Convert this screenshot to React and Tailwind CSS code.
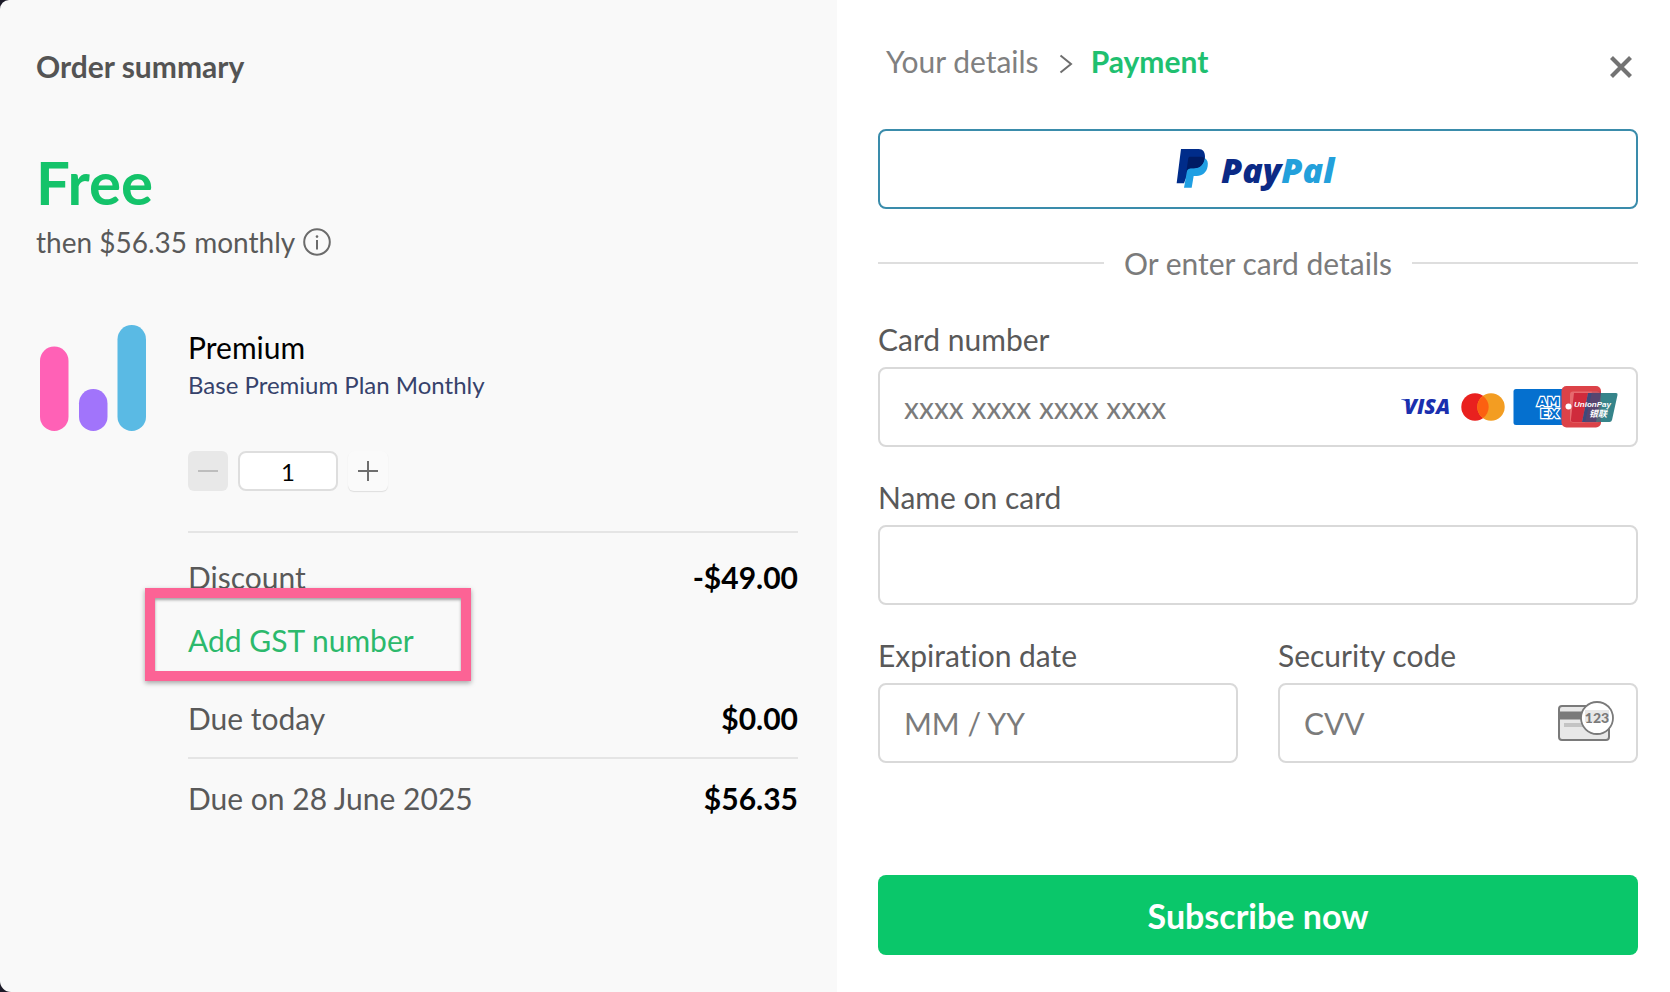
import { useState } from "react";

const fieldClass =
  "h-20 w-full rounded-lg border-2 border-[#d9d9d9] bg-white px-6 text-[30px] text-[#4f4f4f] outline-none placeholder:text-[#7b7b7b] focus:border-[#0ac76a]";

function InfoIcon() {
  return (
    <svg viewBox="0 0 28 28" className="size-7" fill="none" aria-hidden="true">
      <circle cx="14" cy="14" r="12.8" stroke="#6b6b6b" strokeWidth="2" />
      <circle cx="14" cy="8.6" r="1.3" fill="#6b6b6b" />
      <path d="M14 12v9.4" stroke="#6b6b6b" strokeWidth="2" />
    </svg>
  );
}

function PlanLogo() {
  return (
    <svg viewBox="0 0 106 106" className="h-[106px] w-[106px]" aria-hidden="true">
      <rect x="0" y="21.5" width="28.5" height="84.5" rx="14.2" fill="#ff61b6" />
      <rect x="39" y="64" width="28.5" height="42" rx="14.2" fill="#a174fb" />
      <rect x="77.5" y="0" width="28.5" height="106" rx="14.2" fill="#5abae4" />
    </svg>
  );
}

function PayPalLogo() {
  return (
    <svg viewBox="0 0 164 48" className="h-12 w-[164px]" role="img" aria-label="PayPal">
      <g transform="translate(0 3) scale(0.3333)">
        <path d="M15 3H68C81 3 87 12 87 26C87 48 74 61 55 62L34 80L24 106H2Z" fill="#002c8a" />
        <path
          d="M86 30C94 35 97 43 95 55C92 74 79 84 62 84H53L47 119H24L32 74C33 66 37 62 44 61H55C74 60 84 47 86 30Z"
          fill="#1f9fe3"
        />
        <path
          d="M37 30C38 27 40 26 44 26H70C80 26 84 28 86 31C83 49 73 61 55 61H43C36 62 32 66 31 72Z"
          fill="#001c64"
        />
      </g>
      <text x="45" y="38" className="font-['Open_Sans',sans-serif] text-[34px] font-extrabold italic">
        <tspan fill="#0b2a86">Pay</tspan>
        <tspan fill="#23a0db">Pal</tspan>
      </text>
    </svg>
  );
}

function VisaLogo() {
  return (
    <svg viewBox="0 0 52 30" className="h-[30px] w-[52px]" role="img" aria-label="Visa">
      <path d="M0 7.2H7L9.500 14C7.500 10.400 4 8.200 0 7.600Z" fill="#1a2fae" />
      <text
        x="3"
        y="22"
        fill="#1a2fae"
        className="font-['Open_Sans',sans-serif] text-[21px] font-extrabold italic"
      >
        VISA
      </text>
    </svg>
  );
}

function MastercardLogo() {
  return (
    <svg viewBox="0 0 44 28" className="h-7 w-11" role="img" aria-label="Mastercard">
      <circle cx="14" cy="14" r="13.7" fill="#e9211f" />
      <circle cx="30" cy="14" r="13.7" fill="#f39d22" />
      <path d="M22 2.9a13.7 13.7 0 0 1 0 22.2a13.7 13.7 0 0 1 0-22.2Z" fill="#fc6011" />
    </svg>
  );
}

function AmexUnionPayLogo() {
  return (
    <svg
      viewBox="0 0 105 42"
      className="h-[42px] w-[105px]"
      role="img"
      aria-label="American Express and UnionPay"
    >
      <rect x="0.5" y="3" width="56" height="36" rx="2.5" fill="#0570cf" />
      <g
        fill="#0570cf"
        stroke="#ffffff"
        strokeWidth="2.4"
        paintOrder="stroke"
        className="font-['DejaVu_Sans',sans-serif] text-[13px] font-bold"
      >
        <text x="24" y="20">AM</text>
        <text x="27" y="32">EX</text>
      </g>
      <rect x="48.5" y="0" width="39.5" height="41.5" rx="5" fill="#dc4248" />
      <rect x="57" y="5.5" width="30" height="31" rx="3" fill="#e66a6e" />
      <path d="M61 7H75L69 36H60C58 36 57.5 35 58 33Z" fill="#cf2b3c" />
      <path d="M75 7H92L86 36H69Z" fill="#3d4a7c" />
      <path d="M88 7H103Q105 7 104.500 9L99 34Q98.500 36 96.500 36H83Z" fill="#36848a" />
      <path d="M79 5.500H88V36.500H72Z" fill="#8a3b58" opacity="0.35" />
      <circle cx="55.500" cy="20.500" r="3" fill="#ffffff" />
      <text
        x="61"
        y="21"
        fill="#ffffff"
        className="font-['Liberation_Sans',sans-serif] text-[8px] font-bold italic"
      >
        UnionPay
      </text>
      <text
        x="76"
        y="31"
        fill="#ffffff"
        className="font-['Noto_Sans_CJK_SC',sans-serif] text-[9px] font-bold italic"
      >
        银联
      </text>
    </svg>
  );
}

function CvvIcon() {
  return (
    <svg viewBox="0 0 56 40" className="h-10 w-14" aria-hidden="true">
      <rect x="1" y="5" width="50" height="34" rx="3" fill="#e8e8e8" stroke="#7a7a7a" strokeWidth="2" />
      <path d="M1 10.500H28V18.500H1Z" fill="#7a7a7a" />
      <path d="M6 22H28V26H6Z" fill="#c4c4c4" />
      <circle cx="39" cy="17" r="16" fill="#ffffff" stroke="#7a7a7a" strokeWidth="1.800" />
      <path d="M27 9H51V21H27Z" fill="#e8e8e8" />
      <text
        x="39"
        y="21.500"
        textAnchor="middle"
        fill="#7a7a7a"
        className="font-['Lato',sans-serif] text-[14px] font-black"
      >
        123
      </text>
    </svg>
  );
}

function CloseIcon() {
  return (
    <svg viewBox="0 0 22 22" className="size-[22px]" aria-hidden="true">
      <path d="M1.500 1.500L20.500 20.500M20.500 1.500L1.500 20.500" stroke="#737373" strokeWidth="4.200" />
    </svg>
  );
}

function AmountRow({ label, value }) {
  return (
    <div className="flex items-baseline justify-between text-[30px] leading-9">
      <dt className="text-[#595959]">{label}</dt>
      <dd className="font-bold text-black">{value}</dd>
    </div>
  );
}

function OrderSummary() {
  const [quantity, setQuantity] = useState(1);
  return (
    <section className="bg-[#f9f9f9] pt-12 pr-[39px] pl-9">
      <h2 className="text-[30px] leading-9 font-bold text-[#545454]">Order summary</h2>
      <p className="mt-[62px] text-[60px] leading-[72px] font-bold text-[#14c36a]">Free</p>
      <div className="mt-1.5 flex items-center gap-2">
        <p className="text-[28px] leading-9 text-[#595959]">then $56.35 monthly</p>
        <button type="button" aria-label="Price details">
          <InfoIcon />
        </button>
      </div>

      <div className="mt-[65px] flex gap-[42px] pl-1">
        <div className="shrink-0">
          <PlanLogo />
        </div>
        <div className="min-w-0 flex-1">
          <h3 className="mt-1 text-[30px] leading-9 text-black">Premium</h3>
          <p className="mt-1.5 text-2xl leading-7 text-[#36426b]">Base Premium Plan Monthly</p>

          <div className="mt-[52px] flex gap-2.5">
            <button
              type="button"
              aria-label="Decrease quantity"
              disabled={quantity === 1}
              onClick={() => setQuantity(quantity - 1)}
              className="flex size-10 items-center justify-center rounded-md bg-[#e8e8e8]"
            >
              <svg viewBox="0 0 20 20" className="size-5" aria-hidden="true">
                <path d="M0 10H20" stroke="#bdbdbd" strokeWidth="2" />
              </svg>
            </button>
            <input
              aria-label="Quantity"
              value={quantity}
              onChange={(event) => setQuantity(Number(event.target.value) || 1)}
              className="h-10 w-[100px] rounded-lg border-2 border-[#dedede] bg-white text-center text-2xl text-black outline-none"
            />
            <button
              type="button"
              aria-label="Increase quantity"
              onClick={() => setQuantity(quantity + 1)}
              className="flex size-10 items-center justify-center rounded-md bg-[#fafafa] shadow-[0_1px_1px_#dedede]"
            >
              <svg viewBox="0 0 20 20" className="size-5" aria-hidden="true">
                <path d="M0 10H20M10 0V20" stroke="#6e6e6e" strokeWidth="2" />
              </svg>
            </button>
          </div>

          <dl className="mt-10 border-t-2 border-[#e5e5e5] pt-[26px]">
            <AmountRow label="Discount" value="-$49.00" />
          </dl>
          <div className="relative mt-[27px] text-[30px] leading-9">
            <a href="#gst" className="text-[#2cb96c]">
              Add GST number
            </a>
            <div className="pointer-events-none absolute -top-[34px] -left-[43px] h-[93px] w-[326px] border-[10px] border-[#fc6395] shadow-[0_2px_5px_rgba(0,0,0,0.35),inset_0_2px_3px_rgba(0,0,0,0.35)]" />
          </div>
          <dl className="mt-[42px]">
            <AmountRow label="Due today" value="$0.00" />
          </dl>
          <dl className="mt-[21px] border-t-2 border-[#e5e5e5] pt-[21px]">
            <AmountRow label="Due on 28 June 2025" value="$56.35" />
          </dl>
        </div>
      </div>
    </section>
  );
}

function Field({ id, label, children }) {
  return (
    <div className="min-w-0 flex-1">
      <label htmlFor={id} className="block text-[30px] leading-9 text-[#595959]">
        {label}
      </label>
      <div className="relative mt-2.5">{children}</div>
    </div>
  );
}

function PaymentForm() {
  return (
    <section className="bg-white px-8 pt-[43px] pb-9 pl-[41px]">
      <header className="flex items-start justify-between pr-1.5 pl-2">
        <nav aria-label="Checkout steps" className="flex items-center text-[30px] leading-9">
          <a href="#details" className="text-[#808080]">
            Your details
          </a>
          <svg viewBox="0 0 14 20" className="mr-[18px] ml-5 mt-1.5 h-5 w-3.5" fill="none" aria-hidden="true">
            <path d="M1.500 1.500L12 10L1.500 18.500" stroke="#6e6e6e" strokeWidth="2" />
          </svg>
          <span aria-current="step" className="font-bold text-[#1fc070]">
            Payment
          </span>
        </nav>
        <button type="button" aria-label="Close" className="mt-[13px]">
          <CloseIcon />
        </button>
      </header>

      <button
        type="button"
        className="mt-[50px] flex h-20 w-full items-center justify-center rounded-lg border-2 border-[#3a8cab] bg-white"
      >
        <PayPalLogo />
      </button>

      <div className="mt-9 flex items-center gap-5">
        <span className="h-0.5 flex-1 bg-[#dedede]" />
        <span className="text-[30px] leading-9 text-[#7b7b7b]">Or enter card details</span>
        <span className="h-0.5 flex-1 bg-[#dedede]" />
      </div>

      <form className="mt-10" onSubmit={(event) => event.preventDefault()}>
        <div className="flex flex-col gap-8">
          <Field id="card-number" label="Card number">
            <input id="card-number" inputMode="numeric" placeholder="xxxx xxxx xxxx xxxx" className={fieldClass} />
            <div className="pointer-events-none absolute inset-y-0 right-5 flex items-center gap-2">
              <VisaLogo />
              <MastercardLogo />
              <AmexUnionPayLogo />
            </div>
          </Field>
          <Field id="card-name" label="Name on card">
            <input id="card-name" className={fieldClass} />
          </Field>
          <div className="flex gap-10">
            <Field id="card-expiry" label="Expiration date">
              <input id="card-expiry" placeholder="MM / YY" className={fieldClass} />
            </Field>
            <Field id="card-cvv" label="Security code">
              <input id="card-cvv" placeholder="CVV" className={fieldClass} />
              <div className="pointer-events-none absolute inset-y-0 right-6 flex items-center pb-1">
                <CvvIcon />
              </div>
            </Field>
          </div>
        </div>
        <button
          type="submit"
          className="mt-28 h-20 w-full rounded-lg bg-[#0ac76a] text-[34px] font-bold text-white"
        >
          Subscribe now
        </button>
      </form>
    </section>
  );
}

export default function App() {
  return (
    <div className="min-h-screen bg-[#1c1a28] font-['Lato',sans-serif] [font-variant-ligatures:no-common-ligatures]">
      <main className="grid min-h-screen grid-cols-[837fr_833fr] overflow-hidden rounded-tl-[9px] rounded-bl-[11px]">
        <OrderSummary />
        <PaymentForm />
      </main>
    </div>
  );
}
